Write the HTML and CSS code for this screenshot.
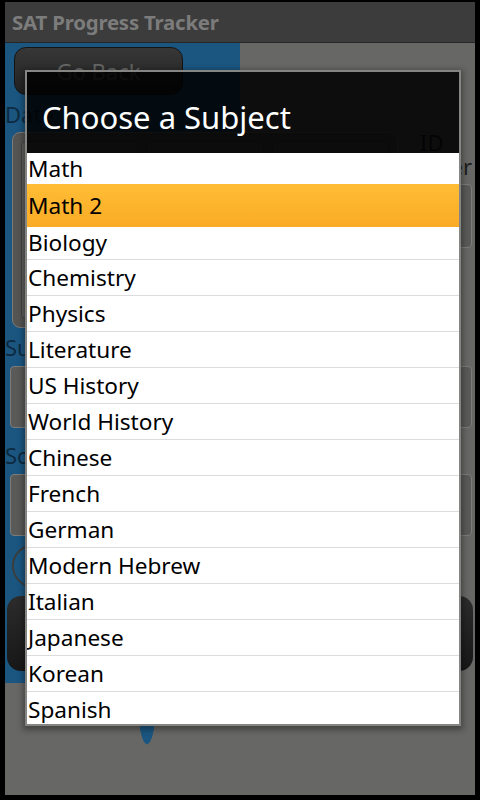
FILE: index.html
```html
<!DOCTYPE html>
<html>
<head>
<meta charset="utf-8">
<link rel="stylesheet" href="styles.css">
</head>
<body>
<div class="screen">
  <header class="titlebar">SAT Progress Tracker</header>
  <main class="content">
    <div class="back">Go Back</div>
    <div class="label">Date</div>
    <div class="date-row">
      <div class="picker">
        <div class="pick-col"></div><div class="pick-col"></div><div class="pick-col"></div>
      </div>
      <div class="id-col">
        <div class="id-label">ID</div>
        <div class="num-label">Number</div>
        <div class="field small"></div>
      </div>
    </div>
    <div class="label">Subject</div>
    <div class="field"></div>
    <div class="label">Score</div>
    <div class="field"></div>
    <div class="radio-row"><span class="radio"></span></div>
    <div class="btn-row"><div class="btn"></div><div class="btn"></div></div>
  </main>
  <div class="dialog">
    <div class="dlg-head">Choose a Subject</div>
    <ul class="list">
      <li class="item first">Math</li>
      <li class="item sel">Math 2</li>
      <li class="item third">Biology</li>
      <li class="item">Chemistry</li>
      <li class="item">Physics</li>
      <li class="item">Literature</li>
      <li class="item">US History</li>
      <li class="item">World History</li>
      <li class="item">Chinese</li>
      <li class="item">French</li>
      <li class="item">German</li>
      <li class="item">Modern Hebrew</li>
      <li class="item">Italian</li>
      <li class="item">Japanese</li>
      <li class="item">Korean</li>
      <li class="item last">Spanish</li>
    </ul>
  </div>
</div>
</body>
</html>
```
FILE: styles.css
```css
html, body {
  margin: 0;
  padding: 0;
  background: #000;
}
body {
  width: 480px;
  height: 800px;
  overflow: hidden;
  font-family: "Noto Sans", "Open Sans", sans-serif;
}
.screen {
  position: relative;
  margin: 2px 0 0 5px;
  width: 470px;
  height: 793px;
  background: #676865;
  overflow: hidden;
}
.titlebar {
  height: 40px;
  line-height: 40px;
  background: #3c3c3c;
  border-bottom: 1px solid #262626;
  color: #7c7c7c;
  font-weight: bold;
  font-size: 20.4px;
  padding-left: 7px;
  letter-spacing: -0.2px;
}
.content {
  height: 752px;
  background:
    radial-gradient(ellipse 9px 41px at 50% 50%, #1b5680 96%, transparent 100%) 133px 620px / 18px 82px no-repeat,
    linear-gradient(#1b5680, #1b5680) 0 0 / 235px 640px no-repeat,
    #676865;
  padding-top: 4px;
  box-sizing: border-box;
}
.back {
  margin-left: 9px;
  width: 169px;
  height: 48px;
  border-radius: 12px;
  background: linear-gradient(#363736, #202120);
  border: 1px solid #141414;
  box-sizing: border-box;
  color: #666;
  font-size: 22px;
  text-align: center;
  line-height: 46px;
}
.label {
  color: #0d2a40;
  font-size: 22px;
  height: 34px;
  line-height: 38px;
}
.date-row {
  display: flex;
  margin: 3px 3px 0 7px;
  height: 196px;
}
.picker {
  flex: 1;
  display: flex;
  gap: 8px;
  border-radius: 8px;
  background: #555654;
  border: 1px solid #7a7a78;
  padding: 8px;
  margin-right: 22px;
}
.pick-col {
  flex: 1;
  background: #5f605e;
  border: 1px solid #444;
  border-radius: 4px;
}
.id-col {
  width: 52px;
  display: flex;
  flex-direction: column;
  align-items: flex-end;
}
.id-label {
  color: #222;
  font-size: 22px;
  align-self: flex-start;
  line-height: 20px;
}
.num-label {
  color: #1c1c1c;
  font-size: 22px;
  line-height: 28px;
  white-space: nowrap;
}
.field {
  margin: 4px 3px 8px 5px;
  height: 62px;
  border-radius: 4px;
  background: #5a5b59;
  border: 1px solid #7c7d7b;
  box-sizing: border-box;
}
.field.small {
  width: 44px;
  margin: 4px 0 0 0;
  height: 64px;
}
.radio-row {
  height: 50px;
  padding-left: 7px;
}
.radio {
  display: block;
  width: 44px;
  height: 44px;
  border-radius: 50%;
  border: 2px solid #3c3d3b;
  box-sizing: border-box;
}
.btn-row {
  display: flex;
  gap: 10px;
  margin: 2px 2px 0 2px;
}
.btn {
  flex: 1;
  height: 75px;
  border-radius: 14px;
  background: linear-gradient(#2b2c2b, #161716);
}
.dialog {
  position: absolute;
  left: 20px;
  top: 68px;
  width: 436px;
  height: 656px;
  border: 2px solid #858684;
  box-sizing: border-box;
  box-shadow: 0 2px 6px 2px rgba(0, 0, 0, 0.35);
  display: flex;
  flex-direction: column;
}
.dlg-head {
  height: 81px;
  flex: none;
  box-sizing: border-box;
  background: rgba(0, 0, 0, 0.87);
  color: #fff;
  font-size: 31px;
  line-height: 31px;
  padding: 30px 0 0 15px;
}
.list {
  list-style: none;
  margin: 0;
  padding: 0;
  background: #fff;
  flex: 1;
  overflow: hidden;
}
.item {
  height: 36px;
  line-height: 35px;
  box-sizing: border-box;
  border-bottom: 1px solid #dcdcdc;
  font-size: 22.6px;
  color: #000;
  padding-left: 1px;
}
.item.first {
  height: 31px;
  line-height: 31px;
  border-bottom: none;
}
.item.sel {
  height: 43px;
  line-height: 43px;
  border-bottom: none;
  background: linear-gradient(#ffbd35, #fbab25);
}
.item.third {
  height: 33px;
  line-height: 32px;
}
.item.last {
  border-bottom: none;
}
```
